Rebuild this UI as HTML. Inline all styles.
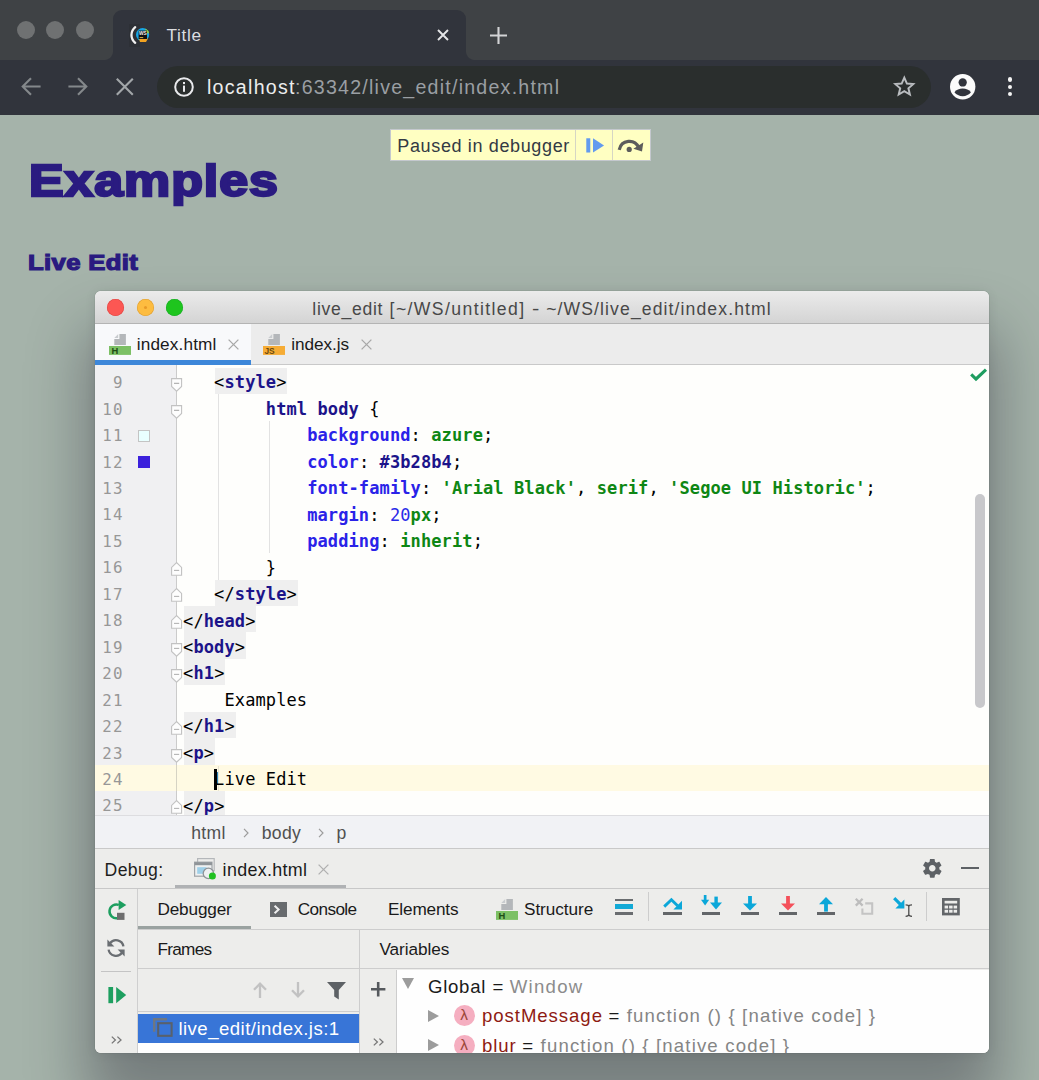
<!DOCTYPE html>
<html lang="en"><head><meta charset="utf-8"><title>Title</title>
<style>
html,body{margin:0;padding:0}
body{width:1039px;height:1080px;overflow:hidden;position:relative;background:#a5b3aa;font-family:"Liberation Sans",sans-serif}
.a{position:absolute}
.t{position:absolute;white-space:pre;display:block}
.ss{font-family:"Liberation Sans",sans-serif}
.mn{font-family:"DejaVu Sans Mono","Liberation Mono",monospace}
svg{position:absolute;overflow:visible}
/* chrome */
#frame{left:0;top:0;width:1039px;height:60px;background:#3f4245}
#tab{left:113px;top:10px;width:353px;height:50px;background:#31343c;border-radius:9px 9px 0 0}
#tab:before,#tab:after{content:"";position:absolute;bottom:0;width:9px;height:9px;background:radial-gradient(circle at 0 0,rgba(0,0,0,0) 8.5px,#31343c 9.5px)}
#tab:before{left:-9px}
#tab:after{right:-9px;background:radial-gradient(circle at 100% 0,rgba(0,0,0,0) 8.5px,#31343c 9.5px)}
#toolbar{left:0;top:60px;width:1039px;height:55px;background:#31343c}
#omni{left:157px;top:66px;width:774px;height:41.5px;border-radius:21px;background:#2a2e2d}
.dot{width:18px;height:18px;border-radius:50%;background:#6f7172}
/* paused overlay */
#paused{left:390px;top:128.9px;width:258.6px;height:30.4px;background:#ffffc2;border:1px solid #c4c8ce}
#paused i{position:absolute;top:0;width:1px;height:100%;background:#d6d6c4}
/* ide */
#ide{left:95.3px;top:291.3px;width:894px;height:762px;border-radius:6px;overflow:hidden;background:#fefefc;
 box-shadow:0 0 1px rgba(0,0,0,.4),0 48px 60px 10px rgba(10,3,22,.30),0 1px 12px rgba(10,3,22,.08)}
#ide .a,#ide .t,#ide svg{position:absolute}
</style></head><body>
<div id="frame" class="a"></div>
<div class="a dot" style="left:17.0px;top:21px"></div>
<div class="a dot" style="left:46.3px;top:21px"></div>
<div class="a dot" style="left:76.0px;top:21px"></div>
<div id="tab" class="a"></div>
<div class="a" style="left:128.9px;top:23.6px;width:11.4px;height:23px;background:#2d3036"></div>
<svg style="left:128px;top:25px" width="24" height="20" viewBox="0 0 24 20">
<path d="M7.2 2.2 C2.2 6.5 2.2 13.5 7.2 17.8" fill="none" stroke="#f1f1f1" stroke-width="2.3" stroke-linecap="round"/>
<circle cx="14.6" cy="9.6" r="6.6" fill="#16a6e6"/>
<path d="M17.5 3.6 a6.6 6.6 0 0 1 3.6 5 l-4 -1 z" fill="#8fd14a"/>
<path d="M11 13.5 h9 l-2 3.4 h-6 z" fill="#f3a321"/>
<rect x="10.6" y="5.6" width="8.4" height="8.4" fill="#111"/>
<text x="10.9" y="10.4" font-family="Liberation Sans, sans-serif" font-weight="bold" font-size="5.2" fill="#f2f2f2" textLength="7.8" lengthAdjust="spacingAndGlyphs">WS</text>
<rect x="11.6" y="12.2" width="3.6" height="0.9" fill="#f5c451"/>
</svg>
<span class="t ss" style="left:166.50px;top:24.61px;font-size:17.3px;line-height:20px;color:#dcdde0;letter-spacing:0.624px;">Title</span>
<svg style="left:436.5px;top:29px" width="12" height="12" viewBox="0 0 12 12"><path d="M1 1L11 11M11 1L1 11" stroke="#e4e5e7" stroke-width="1.9" fill="none"/></svg>
<svg style="left:490px;top:26.5px" width="17" height="17" viewBox="0 0 17 17"><path d="M8.5 0V17M0 8.5H17" stroke="#d3d4d6" stroke-width="2.1" fill="none"/></svg>
<div id="toolbar" class="a"></div>
<div id="omni" class="a"></div>
<svg style="left:20.5px;top:77.3px" width="20" height="19" viewBox="0 0 20 19"><path d="M19.6 9.5H2.4M10 1.2L1.7 9.5L10 17.8" stroke="#84888b" stroke-width="2.1" fill="none"/></svg>
<svg style="left:67.8px;top:77.3px" width="20" height="19" viewBox="0 0 20 19"><path d="M0.4 9.5H17.6M10 1.2L18.3 9.5L10 17.8" stroke="#84888b" stroke-width="2.1" fill="none"/></svg>
<svg style="left:116.3px;top:78px" width="17.6" height="17.6" viewBox="0 0 17.6 17.6"><path d="M0.8 0.8L16.8 16.8M16.8 0.8L0.8 16.8" stroke="#a2a6a9" stroke-width="2.1" fill="none"/></svg>
<svg style="left:173.8px;top:77px" width="20" height="20" viewBox="0 0 20 20"><circle cx="10" cy="10" r="8.8" fill="none" stroke="#e9eaec" stroke-width="2"/><rect x="9" y="8.6" width="2" height="6.2" fill="#e9eaec"/><rect x="9" y="5" width="2" height="2.1" fill="#e9eaec"/></svg>
<span class="t ss" style="left:207.00px;top:77.01px;font-size:19.6px;line-height:20px;color:#eceded;letter-spacing:1.271px;">localhost</span>
<span class="t ss" style="left:295.00px;top:77.01px;font-size:19.6px;line-height:20px;color:#9a9fa3;letter-spacing:1.231px;">:63342/live_edit/index.html</span>
<svg style="left:894px;top:76.4px" width="20.6" height="19.6" viewBox="0 0 22 21"><path d="M11 1.8 L13.8 8.1 L20.6 8.7 L15.4 13.2 L17 19.9 L11 16.3 L5 19.9 L6.6 13.2 L1.4 8.7 L8.2 8.1 Z" fill="none" stroke="#b9bcbf" stroke-width="2.1" stroke-linejoin="miter"/></svg>
<svg style="left:950.3px;top:74px" width="25.4" height="25.4" viewBox="0 0 24 24"><circle cx="12" cy="12" r="12" fill="#fbfbfb"/><circle cx="12" cy="8" r="3.9" fill="#31343c"/><path d="M4.2 17.3 C5.8 14.6 9 13.6 12 13.6 C15 13.6 18.2 14.6 19.8 17.3 C18 19.6 15.2 21 12 21 C8.8 21 6 19.6 4.2 17.3Z" fill="#31343c"/></svg>
<div class="a" style="left:1007.6px;top:77.3px;width:4.8px;height:4.8px;border-radius:50%;background:#f4f4f4"></div>
<div class="a" style="left:1007.6px;top:84.5px;width:4.8px;height:4.8px;border-radius:50%;background:#f4f4f4"></div>
<div class="a" style="left:1007.6px;top:91.7px;width:4.8px;height:4.8px;border-radius:50%;background:#f4f4f4"></div>
<span class="t ss" style="left:28.60px;top:171.05px;font-size:44.6px;line-height:20px;color:#2a1b80;font-weight:bold;transform-origin:0 50%;transform:scaleX(1.1634);-webkit-text-stroke:2.5px #2a1b80;letter-spacing:0.8px;">Examples</span>
<span class="t ss" style="left:27.80px;top:252.65px;font-size:21.2px;line-height:20px;color:#2a1b80;font-weight:bold;transform-origin:0 50%;transform:scaleX(1.2104);-webkit-text-stroke:1.2px #2a1b80;letter-spacing:0.3px;">Live Edit</span>
<div id="paused" class="a"><i style="left:184.4px"></i><i style="left:221.4px"></i></div>
<span class="t ss" style="left:397.30px;top:135.56px;font-size:18px;line-height:20px;color:#333a44;letter-spacing:0.639px;">Paused in debugger</span>
<svg style="left:585.6px;top:137.6px" width="19" height="14.8" viewBox="0 0 20 15.4"><rect x="0.3" y="0.2" width="4.2" height="15" fill="#639bee"/><path d="M7.4 0.2 L19 7.7 L7.4 15.2 Z" fill="#639bee"/></svg>
<svg style="left:617.4px;top:137.8px" width="27" height="15" viewBox="0 0 27 15"><path d="M2.2 11.8 C4.5 1.5 17.5 0.5 21.8 9.6" fill="none" stroke="#5c5c5c" stroke-width="3.2"/><path d="M26.3 4.6 L25 13.6 L16.4 10.8 Z" fill="#5c5c5c"/><circle cx="12.2" cy="11.4" r="2.6" fill="#5c5c5c"/></svg>
<div id="ide" class="a">
<div class="a" style="left:0.00px;top:0.00px;width:894.00px;height:33.10px;background:linear-gradient(#ebebeb,#d4d4d4);border-bottom:1px solid #b4b4b4;box-sizing:border-box;"></div>
<div class="a" style="left:11.70px;top:7.40px;width:17.4px;height:17.4px;border-radius:50%;background:#fc5753;box-shadow:inset 0 0 0 0.6px #df4744"></div>
<div class="a" style="left:41.30px;top:7.40px;width:17.4px;height:17.4px;border-radius:50%;background:#fdbc40;box-shadow:inset 0 0 0 0.6px #de9f34"></div>
<div class="a" style="left:70.80px;top:7.40px;width:17.4px;height:17.4px;border-radius:50%;background:#1ec51e;box-shadow:inset 0 0 0 0.6px #1aab29"></div>
<div class="a" style="left:48.40px;top:14.50px;width:3.2px;height:3.2px;border-radius:50%;background:#e89a28"></div>
<span class="t ss" style="left:217.00px;top:7.60px;font-size:17.6px;line-height:20px;color:#484848;letter-spacing:0.706px;">live_edit</span>
<span class="t ss" style="left:294.30px;top:7.60px;font-size:17.6px;line-height:20px;color:#484848;letter-spacing:1.400px;">[~/WS/untitled]</span>
<span class="t ss" style="left:436.70px;top:7.60px;font-size:17.6px;line-height:20px;color:#484848;transform:scaleX(1.25);transform-origin:0 50%;">-</span>
<span class="t ss" style="left:450.90px;top:7.60px;font-size:17.6px;line-height:20px;color:#484848;letter-spacing:1.104px;">~/WS/live_edit/index.html</span>
<div class="a" style="left:0.00px;top:33.10px;width:894.00px;height:40.60px;background:#ececec;border-bottom:1px solid #c9c9c9;box-sizing:border-box;"></div>
<div class="a" style="left:0.00px;top:33.10px;width:156.00px;height:40.60px;background:#f8f9fb;"></div>
<div class="a" style="left:0.00px;top:68.90px;width:156.00px;height:4.60px;background:#3d87d9;"></div>
<svg style="left:13.30px;top:42.70px" width="22" height="21" viewBox="0 0 22 21">
<path d="M10.4 0 H16.9 V11 H5.3 V5.1 H10.4 Z" fill="#b4b7ba"/><path d="M9.2 0 V3.9 H5.3 Z" fill="#c9cccf"/>
<rect x="0" y="12" width="22" height="8.9" fill="#7cc065"/>
<text x="2.4" y="19.9" font-family="Liberation Sans, sans-serif" font-weight="bold" font-size="9.4" fill="#1f4d16">H</text></svg>
<span class="t ss" style="left:41.50px;top:42.74px;font-size:17.2px;line-height:20px;color:#1a1a1a;letter-spacing:0.130px;">index.html</span>
<svg style="left:132.70px;top:47.40px" width="11" height="11" viewBox="0 0 11 11"><path d="M0.6 0.6L10.4 10.4M10.4 0.6L0.6 10.4" stroke="#a9a9a9" stroke-width="1.3" fill="none"/></svg>
<svg style="left:167.70px;top:42.70px" width="22" height="21" viewBox="0 0 22 21">
<path d="M10.4 0 H16.9 V11 H5.3 V5.1 H10.4 Z" fill="#b4b7ba"/><path d="M9.2 0 V3.9 H5.3 Z" fill="#c9cccf"/>
<rect x="0" y="12" width="22" height="8.9" fill="#f6ac35"/>
<text x="1.4" y="19.9" font-family="Liberation Sans, sans-serif" font-weight="bold" font-size="8.4" fill="#6b4a0f">JS</text></svg>
<span class="t ss" style="left:195.90px;top:42.74px;font-size:17.2px;line-height:20px;color:#1a1a1a;letter-spacing:-0.068px;">index.js</span>
<svg style="left:265.30px;top:47.40px" width="11" height="11" viewBox="0 0 11 11"><path d="M0.6 0.6L10.4 10.4M10.4 0.6L0.6 10.4" stroke="#a9a9a9" stroke-width="1.3" fill="none"/></svg>
<div class="a" style="left:0.00px;top:73.70px;width:80.70px;height:450.00px;background:#f0f0f2;"></div>
<div class="a" style="left:80.30px;top:73.70px;width:1.20px;height:450.00px;background:#cbcbcb;"></div>
<div class="a" style="left:0.00px;top:473.50px;width:894.00px;height:26.46px;background:#fffae3;"></div>
<div class="a" style="left:80.40px;top:473.50px;width:1.00px;height:26.46px;background:#d6d3c4;"></div>
<div class="a" style="left:122.70px;top:103.06px;width:1.00px;height:185.22px;background:#e2e2e2;"></div>
<div class="a" style="left:174.00px;top:129.52px;width:1.00px;height:132.30px;background:#e2e2e2;"></div>
<div class="a" style="left:122.70px;top:474.50px;width:1.00px;height:25.46px;background:#e8e4d2;"></div>
<div class="a" style="left:119.32px;top:76.60px;width:72.78px;height:26.46px;background:#efefef;"></div>
<div class="t mn" style="left:118.82px;top:76.12px;line-height:30.0px;font-size:17.0px;letter-spacing:0.105px;color:#000">&lt;<span style="color:#1c148a;font-weight:bold">style</span>&gt;</div>
<div class="t mn" style="left:0.00px;width:28.40px;text-align:right;top:76.83px;line-height:30.0px;font-size:15.8px;letter-spacing:1.2px;color:#979797">9</div>
<div class="t mn" style="left:170.52px;top:102.58px;line-height:30.0px;font-size:17.0px;letter-spacing:0.105px;color:#000"><span style="color:#1c148a;font-weight:bold">html body</span> {</div>
<div class="t mn" style="left:0.00px;width:28.40px;text-align:right;top:103.29px;line-height:30.0px;font-size:15.8px;letter-spacing:1.2px;color:#979797">10</div>
<div class="t mn" style="left:211.88px;top:129.04px;line-height:30.0px;font-size:17.0px;letter-spacing:0.105px;color:#000"><span style="color:#2a22e8;font-weight:bold">background</span>: <span style="color:#0e8714;font-weight:bold">azure</span>;</div>
<div class="t mn" style="left:0.00px;width:28.40px;text-align:right;top:129.75px;line-height:30.0px;font-size:15.8px;letter-spacing:1.2px;color:#979797">11</div>
<div class="t mn" style="left:211.88px;top:155.50px;line-height:30.0px;font-size:17.0px;letter-spacing:0.105px;color:#000"><span style="color:#2a22e8;font-weight:bold">color</span>: <span style="color:#1c148a;font-weight:bold">#3b28b4</span>;</div>
<div class="t mn" style="left:0.00px;width:28.40px;text-align:right;top:156.21px;line-height:30.0px;font-size:15.8px;letter-spacing:1.2px;color:#979797">12</div>
<div class="t mn" style="left:211.88px;top:181.96px;line-height:30.0px;font-size:17.0px;letter-spacing:0.105px;color:#000"><span style="color:#2a22e8;font-weight:bold">font-family</span>: <span style="color:#0e8714;font-weight:bold">&#x27;Arial Black&#x27;</span>, <span style="color:#0e8714;font-weight:bold">serif</span>, <span style="color:#0e8714;font-weight:bold">&#x27;Segoe UI Historic&#x27;</span>;</div>
<div class="t mn" style="left:0.00px;width:28.40px;text-align:right;top:182.67px;line-height:30.0px;font-size:15.8px;letter-spacing:1.2px;color:#979797">13</div>
<div class="t mn" style="left:211.88px;top:208.42px;line-height:30.0px;font-size:17.0px;letter-spacing:0.105px;color:#000"><span style="color:#2a22e8;font-weight:bold">margin</span>: <span style="color:#2a2ae8">20</span><span style="color:#0e8714;font-weight:bold">px</span>;</div>
<div class="t mn" style="left:0.00px;width:28.40px;text-align:right;top:209.13px;line-height:30.0px;font-size:15.8px;letter-spacing:1.2px;color:#979797">14</div>
<div class="t mn" style="left:211.88px;top:234.88px;line-height:30.0px;font-size:17.0px;letter-spacing:0.105px;color:#000"><span style="color:#2a22e8;font-weight:bold">padding</span>: <span style="color:#0e8714;font-weight:bold">inherit</span>;</div>
<div class="t mn" style="left:0.00px;width:28.40px;text-align:right;top:235.59px;line-height:30.0px;font-size:15.8px;letter-spacing:1.2px;color:#979797">15</div>
<div class="t mn" style="left:170.52px;top:261.34px;line-height:30.0px;font-size:17.0px;letter-spacing:0.105px;color:#000">}</div>
<div class="t mn" style="left:0.00px;width:28.40px;text-align:right;top:262.05px;line-height:30.0px;font-size:15.8px;letter-spacing:1.2px;color:#979797">16</div>
<div class="a" style="left:119.32px;top:288.28px;width:83.12px;height:26.46px;background:#efefef;"></div>
<div class="t mn" style="left:118.82px;top:287.80px;line-height:30.0px;font-size:17.0px;letter-spacing:0.105px;color:#000">&lt;/<span style="color:#1c148a;font-weight:bold">style</span>&gt;</div>
<div class="t mn" style="left:0.00px;width:28.40px;text-align:right;top:288.51px;line-height:30.0px;font-size:15.8px;letter-spacing:1.2px;color:#979797">17</div>
<div class="a" style="left:88.30px;top:314.74px;width:72.78px;height:26.46px;background:#efefef;"></div>
<div class="t mn" style="left:87.80px;top:314.26px;line-height:30.0px;font-size:17.0px;letter-spacing:0.105px;color:#000">&lt;/<span style="color:#1c148a;font-weight:bold">head</span>&gt;</div>
<div class="t mn" style="left:0.00px;width:28.40px;text-align:right;top:314.97px;line-height:30.0px;font-size:15.8px;letter-spacing:1.2px;color:#979797">18</div>
<div class="a" style="left:88.30px;top:341.20px;width:62.44px;height:26.46px;background:#efefef;"></div>
<div class="t mn" style="left:87.80px;top:340.72px;line-height:30.0px;font-size:17.0px;letter-spacing:0.105px;color:#000">&lt;<span style="color:#1c148a;font-weight:bold">body</span>&gt;</div>
<div class="t mn" style="left:0.00px;width:28.40px;text-align:right;top:341.43px;line-height:30.0px;font-size:15.8px;letter-spacing:1.2px;color:#979797">19</div>
<div class="a" style="left:88.30px;top:367.66px;width:41.76px;height:26.46px;background:#efefef;"></div>
<div class="t mn" style="left:87.80px;top:367.18px;line-height:30.0px;font-size:17.0px;letter-spacing:0.105px;color:#000">&lt;<span style="color:#1c148a;font-weight:bold">h1</span>&gt;</div>
<div class="t mn" style="left:0.00px;width:28.40px;text-align:right;top:367.89px;line-height:30.0px;font-size:15.8px;letter-spacing:1.2px;color:#979797">20</div>
<div class="t mn" style="left:129.16px;top:393.64px;line-height:30.0px;font-size:17.0px;letter-spacing:0.105px;color:#000">Examples</div>
<div class="t mn" style="left:0.00px;width:28.40px;text-align:right;top:394.35px;line-height:30.0px;font-size:15.8px;letter-spacing:1.2px;color:#979797">21</div>
<div class="a" style="left:88.30px;top:420.58px;width:52.10px;height:26.46px;background:#efefef;"></div>
<div class="t mn" style="left:87.80px;top:420.10px;line-height:30.0px;font-size:17.0px;letter-spacing:0.105px;color:#000">&lt;/<span style="color:#1c148a;font-weight:bold">h1</span>&gt;</div>
<div class="t mn" style="left:0.00px;width:28.40px;text-align:right;top:420.81px;line-height:30.0px;font-size:15.8px;letter-spacing:1.2px;color:#979797">22</div>
<div class="a" style="left:88.30px;top:447.04px;width:31.42px;height:26.46px;background:#efefef;"></div>
<div class="t mn" style="left:87.80px;top:446.56px;line-height:30.0px;font-size:17.0px;letter-spacing:0.105px;color:#000">&lt;<span style="color:#1c148a;font-weight:bold">p</span>&gt;</div>
<div class="t mn" style="left:0.00px;width:28.40px;text-align:right;top:447.27px;line-height:30.0px;font-size:15.8px;letter-spacing:1.2px;color:#979797">23</div>
<div class="t mn" style="left:118.82px;top:473.02px;line-height:30.0px;font-size:17.0px;letter-spacing:0.105px;color:#000">Live Edit</div>
<div class="t mn" style="left:0.00px;width:28.40px;text-align:right;top:473.73px;line-height:30.0px;font-size:15.8px;letter-spacing:1.2px;color:#979797">24</div>
<div class="a" style="left:88.30px;top:499.96px;width:41.76px;height:26.46px;background:#efefef;"></div>
<div class="t mn" style="left:87.80px;top:499.48px;line-height:30.0px;font-size:17.0px;letter-spacing:0.105px;color:#000">&lt;/<span style="color:#1c148a;font-weight:bold">p</span>&gt;</div>
<div class="t mn" style="left:0.00px;width:28.40px;text-align:right;top:500.19px;line-height:30.0px;font-size:15.8px;letter-spacing:1.2px;color:#979797">25</div>
<div class="a" style="left:118.50px;top:477.30px;width:3.00px;height:21.20px;background:#000;"></div>
<div class="a" style="left:42.40px;top:138.30px;width:12.40px;height:12.30px;background:#e9ffff;box-sizing:border-box;border:1px solid #c4c4c4;"></div>
<div class="a" style="left:42.40px;top:164.70px;width:12.40px;height:12.30px;background:#3b20dc;"></div>
<svg style="left:75.30px;top:86.83px" width="11.2" height="13.8" viewBox="0 0 11.2 13.8"><path d="M0.6 0.6 H10.6 V8.4 L5.6 13.2 L0.6 8.4 Z" fill="#fdfdfd" stroke="#c2c2c2" stroke-width="1.1"/><path d="M3 5.4H8.2" stroke="#b4b4b4" stroke-width="1.1"/></svg>
<svg style="left:75.30px;top:113.29px" width="11.2" height="13.8" viewBox="0 0 11.2 13.8"><path d="M0.6 0.6 H10.6 V8.4 L5.6 13.2 L0.6 8.4 Z" fill="#fdfdfd" stroke="#c2c2c2" stroke-width="1.1"/><path d="M3 5.4H8.2" stroke="#b4b4b4" stroke-width="1.1"/></svg>
<svg style="left:75.30px;top:270.45px" width="11.2" height="13.8" viewBox="0 0 11.2 13.8"><path d="M0.6 13.2 H10.6 V5.4 L5.6 0.6 L0.6 5.4 Z" fill="#fdfdfd" stroke="#c2c2c2" stroke-width="1.1"/><path d="M3 8.4H8.2" stroke="#b4b4b4" stroke-width="1.1"/></svg>
<svg style="left:75.30px;top:296.91px" width="11.2" height="13.8" viewBox="0 0 11.2 13.8"><path d="M0.6 13.2 H10.6 V5.4 L5.6 0.6 L0.6 5.4 Z" fill="#fdfdfd" stroke="#c2c2c2" stroke-width="1.1"/><path d="M3 8.4H8.2" stroke="#b4b4b4" stroke-width="1.1"/></svg>
<svg style="left:75.30px;top:323.37px" width="11.2" height="13.8" viewBox="0 0 11.2 13.8"><path d="M0.6 13.2 H10.6 V5.4 L5.6 0.6 L0.6 5.4 Z" fill="#fdfdfd" stroke="#c2c2c2" stroke-width="1.1"/><path d="M3 8.4H8.2" stroke="#b4b4b4" stroke-width="1.1"/></svg>
<svg style="left:75.30px;top:351.43px" width="11.2" height="13.8" viewBox="0 0 11.2 13.8"><path d="M0.6 0.6 H10.6 V8.4 L5.6 13.2 L0.6 8.4 Z" fill="#fdfdfd" stroke="#c2c2c2" stroke-width="1.1"/><path d="M3 5.4H8.2" stroke="#b4b4b4" stroke-width="1.1"/></svg>
<svg style="left:75.30px;top:377.89px" width="11.2" height="13.8" viewBox="0 0 11.2 13.8"><path d="M0.6 0.6 H10.6 V8.4 L5.6 13.2 L0.6 8.4 Z" fill="#fdfdfd" stroke="#c2c2c2" stroke-width="1.1"/><path d="M3 5.4H8.2" stroke="#b4b4b4" stroke-width="1.1"/></svg>
<svg style="left:75.30px;top:429.21px" width="11.2" height="13.8" viewBox="0 0 11.2 13.8"><path d="M0.6 13.2 H10.6 V5.4 L5.6 0.6 L0.6 5.4 Z" fill="#fdfdfd" stroke="#c2c2c2" stroke-width="1.1"/><path d="M3 8.4H8.2" stroke="#b4b4b4" stroke-width="1.1"/></svg>
<svg style="left:75.30px;top:457.27px" width="11.2" height="13.8" viewBox="0 0 11.2 13.8"><path d="M0.6 0.6 H10.6 V8.4 L5.6 13.2 L0.6 8.4 Z" fill="#fdfdfd" stroke="#c2c2c2" stroke-width="1.1"/><path d="M3 5.4H8.2" stroke="#b4b4b4" stroke-width="1.1"/></svg>
<svg style="left:75.30px;top:508.59px" width="11.2" height="13.8" viewBox="0 0 11.2 13.8"><path d="M0.6 13.2 H10.6 V5.4 L5.6 0.6 L0.6 5.4 Z" fill="#fdfdfd" stroke="#c2c2c2" stroke-width="1.1"/><path d="M3 8.4H8.2" stroke="#b4b4b4" stroke-width="1.1"/></svg>
<svg style="left:875.20px;top:76.30px" width="17" height="13" viewBox="0 0 17 13"><path d="M1.2 6.4 L6 11 L16 1.6" fill="none" stroke="#1f9d60" stroke-width="3.1"/></svg>
<div class="a" style="left:879.70px;top:202.30px;width:10.00px;height:214.40px;background:#c8c8cb;border-radius:5px;"></div>
<div class="a" style="left:0.00px;top:523.70px;width:894.00px;height:34.00px;background:#f1f2f5;border-top:1px solid #dddde0;border-bottom:1px solid #c9c9c9;box-sizing:border-box;"></div>
<span class="t ss" style="left:95.90px;top:531.40px;font-size:17.6px;line-height:20px;color:#505050;letter-spacing:0.321px;">html</span>
<span class="t ss" style="left:166.50px;top:531.40px;font-size:17.6px;line-height:20px;color:#505050;letter-spacing:0.283px;">body</span>
<span class="t ss" style="left:241.10px;top:531.40px;font-size:17.6px;line-height:20px;color:#505050;">p</span>
<svg style="left:147.80px;top:537.10px" width="6" height="10" viewBox="0 0 6 10"><path d="M1 0.8L5 5L1 9.2" fill="none" stroke="#9c9c9c" stroke-width="1.2"/></svg>
<svg style="left:222.60px;top:537.10px" width="6" height="10" viewBox="0 0 6 10"><path d="M1 0.8L5 5L1 9.2" fill="none" stroke="#9c9c9c" stroke-width="1.2"/></svg>
<div class="a" style="left:0.00px;top:557.70px;width:894.00px;height:204.30px;background:#ededeb;"></div>
<span class="t ss" style="left:9.30px;top:568.40px;font-size:17.6px;line-height:20px;color:#1e1e1e;letter-spacing:0.353px;">Debug:</span>
<svg style="left:99.00px;top:567.10px" width="23" height="22" viewBox="0 0 23 22">
<rect x="3.6" y="0.6" width="16.6" height="12" fill="none" stroke="#b4b7ba" stroke-width="1.2"/>
<rect x="0.6" y="4.2" width="17.4" height="14" fill="#eef0f1" stroke="#9fa3a7" stroke-width="1.2"/>
<rect x="0.6" y="4.2" width="17.4" height="3" fill="#8f9498"/>
<rect x="3.2" y="9.2" width="9.4" height="6.6" fill="#9fd0e8"/>
<circle cx="14.4" cy="15.4" r="5.2" fill="#eef0f1" stroke="#8f9498" stroke-width="1.3"/>
<circle cx="18.4" cy="18" r="3.5" fill="#21c121"/></svg>
<span class="t ss" style="left:127.30px;top:568.30px;font-size:17.9px;line-height:20px;color:#1a1a1a;letter-spacing:0.318px;">index.html</span>
<svg style="left:222.50px;top:573.10px" width="11" height="11" viewBox="0 0 11 11"><path d="M0.6 0.6L10.4 10.4M10.4 0.6L0.6 10.4" stroke="#b0b0b0" stroke-width="1.3" fill="none"/></svg>
<div class="a" style="left:79.70px;top:593.30px;width:170.60px;height:3.60px;background:#b0b2b4;"></div>
<div class="a" style="left:0.00px;top:596.30px;width:894.00px;height:1.00px;background:#c8c8c8;"></div>
<svg style="left:825.30px;top:565.40px" width="22.6" height="22.6" viewBox="0 0 24 24"><path fill="#5d6165" d="M19.43 12.98c.04-.32.07-.64.07-.98s-.03-.66-.07-.98l2.11-1.65c.19-.15.24-.42.12-.64l-2-3.46c-.12-.22-.39-.3-.61-.22l-2.49 1c-.52-.4-1.08-.73-1.69-.98l-.38-2.65C14.46 2.18 14.25 2 14 2h-4c-.25 0-.46.18-.49.42l-.38 2.65c-.61.25-1.17.59-1.69.98l-2.49-1c-.23-.09-.49 0-.61.22l-2 3.46c-.13.22-.07.49.12.64l2.11 1.65c-.04.32-.07.65-.07.98s.03.66.07.98l-2.11 1.65c-.19.15-.24.42-.12.64l2 3.46c.12.22.39.3.61.22l2.49-1c.52.4 1.08.73 1.69.98l.38 2.65c.03.24.24.42.49.42h4c.25 0 .46-.18.49-.42l.38-2.65c.61-.25 1.17-.59 1.69-.98l2.49 1c.23.09.49 0 .61-.22l2-3.46c.12-.22.07-.49-.12-.64l-2.11-1.65zM12 15.5c-1.93 0-3.5-1.57-3.5-3.5s1.57-3.5 3.5-3.5 3.5 1.57 3.5 3.5-1.57 3.5-3.5 3.5z"/></svg>
<div class="a" style="left:866.00px;top:575.30px;width:17.70px;height:2.70px;background:#5d6165;"></div>
<div class="a" style="left:41.30px;top:597.30px;width:1.00px;height:164.70px;background:#cfcfcf;"></div>
<svg style="left:11.10px;top:608.30px" width="21" height="21" viewBox="0 0 21 21">
<path d="M11.4 18.2 A6.9 6.9 0 1 1 12.8 4.9" fill="none" stroke="#1d9f5f" stroke-width="2.5"/>
<path d="M12.6 0.1 L20.3 5.1 L12.6 10 Z" fill="#1d9f5f"/>
<rect x="11" y="12.8" width="7.5" height="7.1" fill="#6e6e6e"/></svg>
<svg style="left:11.10px;top:646.90px;transform:scaleX(-1)" width="20" height="20" viewBox="0 0 20 20">
<path d="M2.6 8.4 A7.4 7.4 0 0 1 16 5.4" fill="none" stroke="#6a6e72" stroke-width="2.3"/><path d="M18.6 1.6 V8.6 H11.6 Z" fill="#6a6e72"/>
<path d="M17.4 11.6 A7.4 7.4 0 0 1 4 14.6" fill="none" stroke="#6a6e72" stroke-width="2.3"/><path d="M1.4 18.4 V11.4 H8.4 Z" fill="#6a6e72"/></svg>
<div class="a" style="left:5.70px;top:679.50px;width:30.00px;height:1.00px;background:#c4c4c4;"></div>
<svg style="left:12.70px;top:694.90px" width="19" height="18" viewBox="0 0 19 18"><rect x="0.4" y="1" width="4.7" height="16.2" fill="#1d9f5f"/><path d="M8.2 1 L18.2 9.1 L8.2 17.2 Z" fill="#1d9f5f"/></svg>
<svg style="left:15.90px;top:744.30px" width="11.4" height="8" viewBox="0 0 11.4 8"><path d="M0.8 0.6L4.4 4L0.8 7.4M6.4 0.6L10 4L6.4 7.4" fill="none" stroke="#777" stroke-width="1.3"/></svg>
<span class="t ss" style="left:62.20px;top:607.84px;font-size:17.2px;line-height:20px;color:#1a1a1a;letter-spacing:-0.170px;">Debugger</span>
<div class="a" style="left:42.30px;top:635.10px;width:113.20px;height:3.20px;background:#9aa2a0;"></div>
<svg style="left:175.10px;top:610.70px" width="17" height="15" viewBox="0 0 17 15"><rect width="17" height="15" fill="#686b6e"/><path d="M4.6 3.8 L8.6 7.5 L4.6 11.2" fill="none" stroke="#f0f0f0" stroke-width="2"/></svg>
<span class="t ss" style="left:202.50px;top:607.84px;font-size:17.2px;line-height:20px;color:#1a1a1a;letter-spacing:-0.627px;">Console</span>
<span class="t ss" style="left:292.70px;top:607.84px;font-size:17.2px;line-height:20px;color:#1a1a1a;letter-spacing:-0.149px;">Elements</span>
<svg style="left:400.30px;top:608.10px" width="22" height="21" viewBox="0 0 22 21">
<path d="M10.4 0 H16.9 V11 H5.3 V5.1 H10.4 Z" fill="#b4b7ba"/><path d="M9.2 0 V3.9 H5.3 Z" fill="#c9cccf"/>
<rect x="0" y="12" width="22" height="8.9" fill="#7cc065"/>
<text x="2.4" y="19.9" font-family="Liberation Sans, sans-serif" font-weight="bold" font-size="9.4" fill="#1f4d16">H</text></svg>
<span class="t ss" style="left:428.70px;top:607.84px;font-size:17.2px;line-height:20px;color:#1a1a1a;letter-spacing:-0.066px;">Structure</span>
<div class="a" style="left:519.90px;top:607.40px;width:18.10px;height:2.50px;background:#6a6d70;"></div>
<div class="a" style="left:519.90px;top:613.10px;width:18.10px;height:4.80px;background:#12a9d6;"></div>
<div class="a" style="left:519.90px;top:620.80px;width:18.10px;height:2.60px;background:#6a6d70;"></div>
<div class="a" style="left:552.70px;top:600.70px;width:1.00px;height:28.60px;background:#cdcdcd;"></div>
<div class="a" style="left:42.30px;top:637.60px;width:851.70px;height:1.00px;background:#cdcdcd;"></div>
<div class="a" style="left:568.10px;top:620.80px;width:18.40px;height:2.80px;background:#636669;"></div>
<svg style="left:567.30px;top:606.50px" width="20" height="12" viewBox="0 0 20 12"><path d="M1.2 8.6 L8.4 1.8 L14.6 7.8" fill="none" stroke="#0ba7d9" stroke-width="2.9"/><path d="M10.4 11.4 H19 V2.8 Z" fill="#0ba7d9"/></svg>
<div class="a" style="left:606.50px;top:620.80px;width:18.40px;height:2.80px;background:#636669;"></div>
<svg style="left:605.40px;top:604.20px" width="21" height="15" viewBox="0 0 21 15"><rect x="2.8" y="0" width="2.7" height="6" fill="#0ba7d9"/><path d="M0 4.8 H8.2 L4.1 10.6 Z" fill="#0ba7d9"/><rect x="13.4" y="1.6" width="3.4" height="7" fill="#0ba7d9"/><path d="M9 7.6 H21 L15 14.6 Z" fill="#0ba7d9"/></svg>
<div class="a" style="left:645.30px;top:620.80px;width:18.40px;height:2.80px;background:#636669;"></div>
<svg style="left:647.50px;top:604.50px" width="14" height="14.6" viewBox="0 0 14 14.6"><rect x="5.1" y="0" width="3.8" height="8.6" fill="#0ba7d9"/><path d="M0 7.4 H14 L7 14.6 Z" fill="#0ba7d9"/></svg>
<div class="a" style="left:683.50px;top:620.80px;width:18.40px;height:2.80px;background:#636669;"></div>
<svg style="left:685.70px;top:604.50px" width="14" height="14.6" viewBox="0 0 14 14.6"><rect x="5.1" y="0" width="3.8" height="8.6" fill="#f4505a"/><path d="M0 7.4 H14 L7 14.6 Z" fill="#f4505a"/></svg>
<div class="a" style="left:721.50px;top:620.80px;width:18.40px;height:2.80px;background:#636669;"></div>
<svg style="left:723.70px;top:605.40px" width="14" height="14.6" viewBox="0 0 14 14.6"><rect x="5.1" y="6" width="3.8" height="8.6" fill="#0ba7d9"/><path d="M0 7.2 H14 L7 0 Z" fill="#0ba7d9"/></svg>
<svg style="left:759.60px;top:606.60px" width="18.4" height="17" viewBox="0 0 18.4 17"><path d="M0.8 0.8 L7.6 7.6 M7.6 0.8 L0.8 7.6" stroke="#bdbdbd" stroke-width="2.3"/><path d="M10.2 5.4 H17.2 V15.8 H7.4 V10.4" fill="none" stroke="#c4c4c4" stroke-width="2.1"/></svg>
<svg style="left:797.90px;top:605.80px" width="20" height="19.8" viewBox="0 0 20 19.8"><path d="M1.2 1.2 L8.4 8.4" stroke="#0ba7d9" stroke-width="3.2"/><path d="M11.4 2.4 V11.4 H2.4 Z" fill="#0ba7d9"/><path d="M15.8 8.4 V19 M12.6 7.8 Q15.8 7.8 15.8 9.6 Q15.8 7.8 19 7.8 M12.6 19.4 Q15.8 19.4 15.8 17.6 Q15.8 19.4 19 19.4" fill="none" stroke="#4a4a4a" stroke-width="1.3"/></svg>
<div class="a" style="left:830.90px;top:600.70px;width:1.00px;height:28.60px;background:#cdcdcd;"></div>
<svg style="left:846.90px;top:606.30px" width="17.8" height="17.4" viewBox="0 0 17.8 17.4"><rect x="0" y="0" width="17.8" height="17.4" fill="#636669"/><rect x="2.6" y="2.8" width="12.6" height="2.7" fill="#ededeb"/><rect x="2.6" y="7.6" width="3.5" height="2.9" fill="#ededeb"/><rect x="2.6" y="11.8" width="3.5" height="2.9" fill="#ededeb"/><rect x="7.1" y="7.6" width="3.5" height="2.9" fill="#ededeb"/><rect x="7.1" y="11.8" width="3.5" height="2.9" fill="#ededeb"/><rect x="11.6" y="7.6" width="3.5" height="2.9" fill="#ededeb"/><rect x="11.6" y="11.8" width="3.5" height="2.9" fill="#ededeb"/></svg>
<span class="t ss" style="left:62.20px;top:647.64px;font-size:17.2px;line-height:20px;color:#1a1a1a;letter-spacing:-0.730px;">Frames</span>
<div class="a" style="left:263.30px;top:638.60px;width:1.00px;height:123.40px;background:#cdcdcd;"></div>
<span class="t ss" style="left:284.10px;top:647.64px;font-size:17.2px;line-height:20px;color:#1a1a1a;letter-spacing:-0.047px;">Variables</span>
<div class="a" style="left:42.30px;top:676.90px;width:851.70px;height:1.00px;background:#cdcdcd;"></div>
<svg style="left:157.70px;top:690.70px" width="14" height="16" viewBox="0 0 14 16"><path d="M7 1.6 V16" stroke="#c2c2c2" stroke-width="2.3"/><path d="M1 7.8 L7 1.6 L13 7.8" fill="none" stroke="#c2c2c2" stroke-width="2.3"/></svg>
<svg style="left:196.20px;top:690.70px" width="14" height="16" viewBox="0 0 14 16"><path d="M7 0 V14.4" stroke="#c2c2c2" stroke-width="2.3"/><path d="M1 8.2 L7 14.4 L13 8.2" fill="none" stroke="#c2c2c2" stroke-width="2.3"/></svg>
<svg style="left:232.00px;top:690.40px" width="19" height="17.4" viewBox="0 0 19 17.4"><path d="M0 0 H19 L11.8 8 V17.4 L7.2 14.6 V8 Z" fill="#5d6165"/></svg>
<div class="a" style="left:42.30px;top:719.70px;width:221.00px;height:1.00px;background:#cdcdcd;"></div>
<div class="a" style="left:42.30px;top:722.50px;width:221.00px;height:29.40px;background:#3875d7;"></div>
<div class="a" style="left:42.30px;top:751.90px;width:221.00px;height:10.10px;background:#fefefe;"></div>
<svg style="left:57.70px;top:727.10px" width="20" height="19" viewBox="0 0 20 19"><path d="M1.2 13.8 V1.2 H14" fill="none" stroke="#6e7782" stroke-width="2.4"/><rect x="5.2" y="5.2" width="13.4" height="12.6" fill="none" stroke="#59616b" stroke-width="2.1"/></svg>
<span class="t ss" style="left:83.10px;top:727.66px;font-size:18.6px;line-height:20px;color:#ffffff;letter-spacing:0.466px;">live_edit/index.js:1</span>
<div class="a" style="left:300.70px;top:678.30px;width:1.00px;height:83.70px;background:#cdcdcd;"></div>
<div class="a" style="left:301.70px;top:678.30px;width:592.30px;height:83.70px;background:#fefefe;"></div>
<svg style="left:275.30px;top:690.30px" width="14.4" height="14.4" viewBox="0 0 14.4 14.4"><path d="M7.2 0 V14.4 M0 7.2 H14.4" stroke="#55595d" stroke-width="2.6"/></svg>
<svg style="left:277.50px;top:746.90px" width="11.4" height="8" viewBox="0 0 11.4 8"><path d="M0.8 0.6L4.4 4L0.8 7.4M6.4 0.6L10 4L6.4 7.4" fill="none" stroke="#777" stroke-width="1.3"/></svg>
<svg style="left:306.70px;top:687.00px" width="12" height="11" viewBox="0 0 12 11"><path d="M0 0 H12 L6 11 Z" fill="#9c9c9c"/></svg>
<span class="t ss" style="left:332.70px;top:685.66px;font-size:18.6px;line-height:20px;color:#1a1a1a;letter-spacing:0.730px;">Global</span>
<span class="t ss" style="left:397.30px;top:685.66px;font-size:18.6px;line-height:20px;color:#1a1a1a;">=</span>
<span class="t ss" style="left:414.50px;top:685.66px;font-size:18.6px;line-height:20px;color:#8c8c8c;letter-spacing:1.254px;">Window</span>
<svg style="left:332.80px;top:718.30px" width="11" height="12" viewBox="0 0 11 12"><path d="M0 0 V12 L11 6 Z" fill="#9c9c9c"/></svg>
<div class="a" style="left:358.70px;top:714.20px;width:21px;height:21px;border-radius:50%;background:#f5aec0"></div>
<span class="t ss" style="left:364.90px;top:713.96px;font-size:15.4px;line-height:20px;color:#9b4637;">λ</span>
<span class="t ss" style="left:386.70px;top:714.86px;font-size:18.6px;line-height:20px;color:#8e1a12;letter-spacing:0.941px;">postMessage</span>
<span class="t ss" style="left:513.10px;top:714.86px;font-size:18.6px;line-height:20px;color:#1a1a1a;">=</span>
<span class="t ss" style="left:531.50px;top:714.86px;font-size:18.6px;line-height:20px;color:#858585;letter-spacing:1.149px;">function () { [native code] }</span>
<svg style="left:332.80px;top:747.70px" width="11" height="12" viewBox="0 0 11 12"><path d="M0 0 V12 L11 6 Z" fill="#9c9c9c"/></svg>
<div class="a" style="left:358.70px;top:743.60px;width:21px;height:21px;border-radius:50%;background:#f5aec0"></div>
<span class="t ss" style="left:364.90px;top:743.36px;font-size:15.4px;line-height:20px;color:#9b4637;">λ</span>
<span class="t ss" style="left:386.70px;top:744.26px;font-size:18.6px;line-height:20px;color:#8e1a12;letter-spacing:0.932px;">blur</span>
<span class="t ss" style="left:426.90px;top:744.26px;font-size:18.6px;line-height:20px;color:#1a1a1a;">=</span>
<span class="t ss" style="left:445.30px;top:744.26px;font-size:18.6px;line-height:20px;color:#858585;letter-spacing:1.156px;">function () { [native code] }</span>
</div></body></html>
